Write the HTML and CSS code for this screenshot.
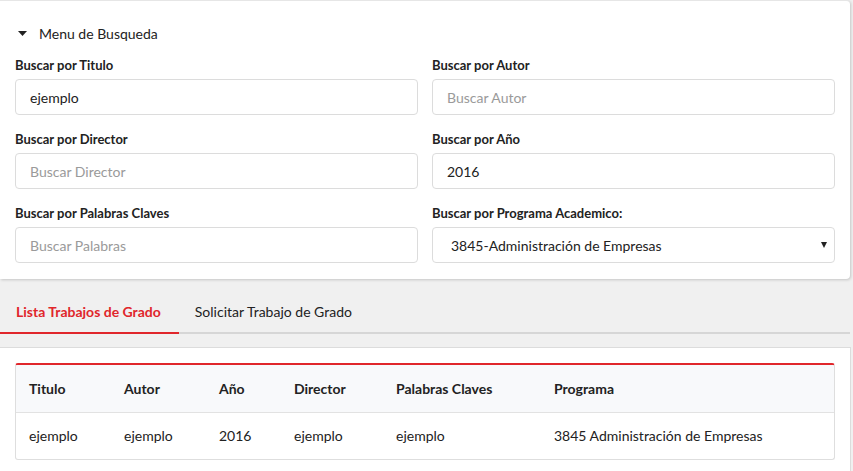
FILE: index.html
```html
<!DOCTYPE html>
<html lang="es">
<head>
<meta charset="utf-8">
<title>Trabajos de Grado</title>
<link rel="stylesheet" href="styles.css">
</head>
<body>
<section class="search-card">
  <div class="menu-title">
    <svg class="caret" width="9" height="5" viewBox="0 0 9 5"><path d="M0 0H9L4.5 5Z" fill="#222"/></svg>
    <span>Menu de Busqueda</span>
  </div>
  <div class="form-grid">
    <div class="field">
      <label class="lbl">Buscar por Titulo</label>
      <input class="inp" type="text" value="ejemplo" placeholder="Buscar Titulo">
    </div>
    <div class="field">
      <label class="lbl">Buscar por Autor</label>
      <input class="inp" type="text" placeholder="Buscar Autor">
    </div>
    <div class="field">
      <label class="lbl">Buscar por Director</label>
      <input class="inp" type="text" placeholder="Buscar Director">
    </div>
    <div class="field">
      <label class="lbl">Buscar por Año</label>
      <input class="inp" type="text" value="2016" placeholder="Buscar Año">
    </div>
    <div class="field">
      <label class="lbl">Buscar por Palabras Claves</label>
      <input class="inp" type="text" placeholder="Buscar Palabras">
    </div>
    <div class="field">
      <label class="lbl">Buscar por Programa Academico:</label>
      <div class="select-wrap">
        <select class="sel">
          <option>3845-Administración de Empresas</option>
        </select>
        <svg class="sel-arrow" width="6" height="6" viewBox="0 0 6 6"><path d="M0 0H6L3 6Z" fill="#222"/></svg>
      </div>
    </div>
  </div>
</section>

<nav class="tabs">
  <div class="tab active">Lista Trabajos de Grado</div>
  <div class="tab">Solicitar Trabajo de Grado</div>
</nav>

<section class="panel">
  <div class="table-card">
    <table class="tbl">
      <colgroup>
        <col class="c1"><col class="c2"><col class="c3"><col class="c4"><col class="c5"><col class="c6">
      </colgroup>
      <thead>
        <tr><th>Titulo</th><th>Autor</th><th>Año</th><th>Director</th><th>Palabras Claves</th><th>Programa</th></tr>
      </thead>
      <tbody>
        <tr><td>ejemplo</td><td>ejemplo</td><td>2016</td><td>ejemplo</td><td>ejemplo</td><td>3845 Administración de Empresas</td></tr>
      </tbody>
    </table>
  </div>
</section>
</body>
</html>
```

FILE: styles.css
```css
* { box-sizing: border-box; }
html, body { margin: 0; padding: 0; }
body {
  background: #f0f0f0;
  font-family: Lato, "Open Sans", sans-serif;
  color: #333;
  font-size: 14px;
  width: 853px;
  height: 471px;
  overflow: hidden;
}

.search-card {
  width: 850px;
  background: #fff;
  border-top: 1px solid #e6e6e6;
  border-radius: 0 4px 4px 0;
  box-shadow: 1px 1px 3px rgba(0,0,0,0.18);
  padding: 21px 15px 16px 15px;
}

.menu-title {
  display: flex;
  align-items: center;
  height: 22px;
  font-size: 14px;
  color: #222;
  margin-bottom: 11px;
}
.caret { margin-left: 3px; margin-right: 12px; }

.form-grid {
  display: grid;
  grid-template-columns: 403px 403px;
  column-gap: 14px;
  row-gap: 14px;
}
.field { display: flex; flex-direction: column; }
.lbl {
  font-weight: 700;
  font-size: 13px;
  line-height: 20px;
  color: #222;
  margin-bottom: 4px;
}
.inp, .sel {
  height: 36px;
  width: 100%;
  border: 1px solid #dcdcdc;
  border-radius: 4px;
  padding: 0 14px;
  font-family: Lato, "Open Sans", sans-serif;
  font-size: 14px;
  color: #222;
  background: #fff;
  outline: none;
}
.inp::placeholder { color: #9a9a9a; }

.select-wrap { position: relative; }
.sel {
  appearance: none;
  -webkit-appearance: none;
  padding-left: 18px;
}
.sel-arrow {
  position: absolute;
  right: 8px;
  top: 15px;
  pointer-events: none;
}

.tabs {
  display: flex;
  width: 850px;
  margin-top: 13px;
  border-bottom: 2px solid #d6d6d6;
}
.tab {
  padding: 10px 18px 10px 16px;
  line-height: 20px;
  font-size: 14px;
  color: #222;
  margin-bottom: -2px;
  border-bottom: 2px solid transparent;
}
.tab.active {
  color: #e0262b;
  font-weight: 700;
  border-bottom-color: #e0262b;
}

.panel {
  width: 851px;
  margin-top: 13px;
  background: #fff;
  border-top: 1px solid #dcdcdc;
  border-right: 1px solid #dcdcdc;
  padding: 15px 15px 0 15px;
  height: 124px;
}

.table-card {
  width: 820px;
  border: 1px solid #dedede;
  border-top: 2px solid #e0262b;
  border-radius: 3px;
  overflow: hidden;
}
.tbl {
  width: 100%;
  border-collapse: collapse;
  table-layout: fixed;
}
.c1 { width: 95px; }
.c2 { width: 95px; }
.c3 { width: 75px; }
.c4 { width: 102px; }
.c5 { width: 158px; }
.tbl th, .tbl td {
  text-align: left;
  padding: 0 13px;
  font-size: 14px;
  color: #222;
  white-space: nowrap;
}
.tbl th {
  height: 47px;
  font-weight: 700;
  background: #f8f9fb;
  border-bottom: 1px solid #e2e2e2;
}
.tbl td {
  height: 47px;
}
```
